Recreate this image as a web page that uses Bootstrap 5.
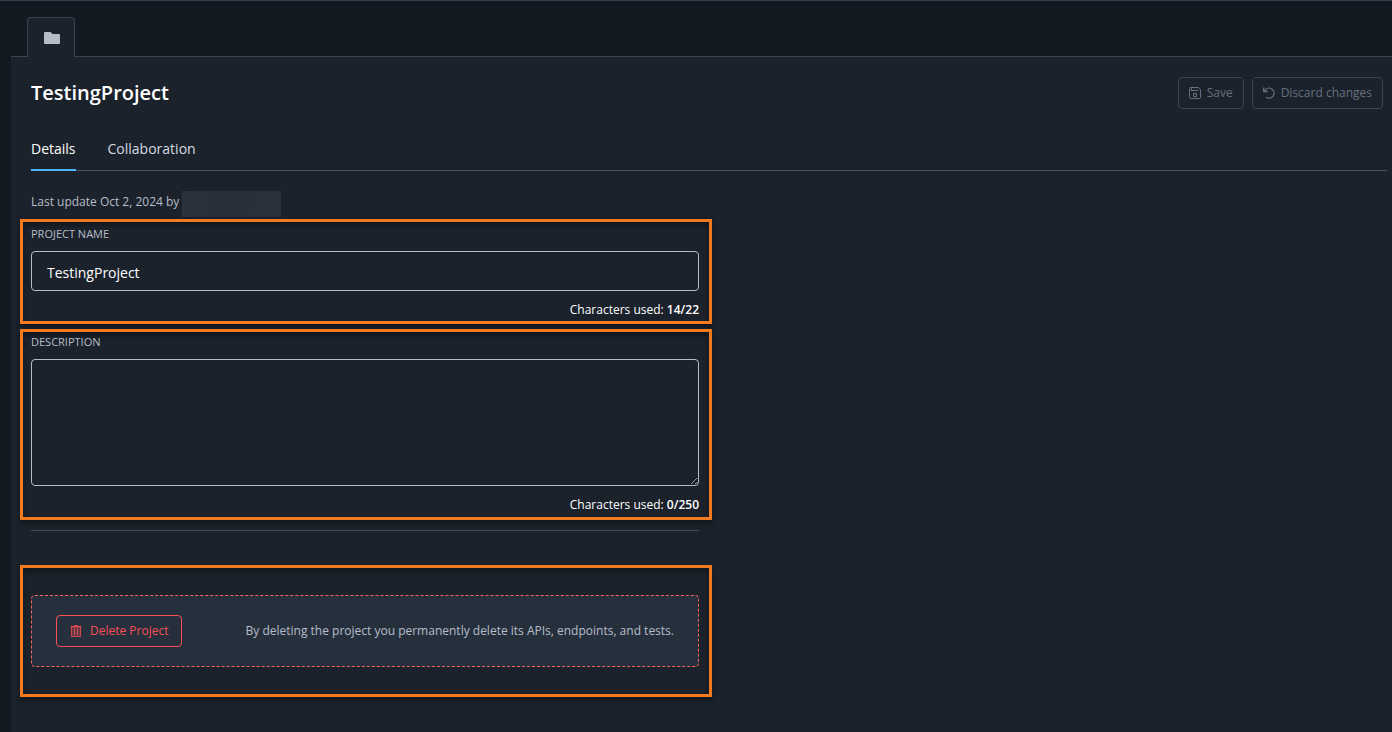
<!DOCTYPE html>
<html lang="en">
<head>
<meta charset="utf-8">
<meta name="viewport" content="width=device-width, initial-scale=1">
<title>TestingProject</title>
<link href="https://cdn.jsdelivr.net/npm/bootstrap@5.3.0/dist/css/bootstrap.min.css" rel="stylesheet">
<style>
  body { background: #121920; color: #b6bdc9; font-family: "Open Sans", sans-serif; font-size: 12px; line-height: 16px; }
  .shell { border-top: 1px solid #36404d; padding: 16px 0 0 11px; }
  .file-tabs { padding-left: 16px; }
  .file-tab { width: 48px; height: 40px; margin-bottom: -1px; background: #1b222b; border: 1px solid #3a4350; border-bottom: 0; border-radius: 4px 4px 0 0; color: #b6bdc9; position: relative; padding: 0 0 0 2px; }
  .panel { background: #1b222b; border-top: 1px solid #3a4350; padding: 20px 5px 0 20px; }
  .title-bar { padding-right: 4px; }
  .title-bar h1 { font-size: 20px; line-height: 32px; font-weight: 600; color: #fff; }
  .btn { --bs-btn-font-size: 12px; --bs-btn-border-radius: 4px; --bs-btn-padding-y: 0; line-height: 16px; height: 32px; }
  .btn-quiet { --bs-btn-padding-x: 10px; --bs-btn-color: #66707f; --bs-btn-disabled-color: #66707f; --bs-btn-border-color: #3a4351; --bs-btn-disabled-border-color: #3a4351; --bs-btn-disabled-opacity: 1; gap: 6px; }
  .btn-delete { --bs-btn-padding-x: 13px; --bs-btn-color: #fa4d56; --bs-btn-border-color: #fa4d56; --bs-btn-hover-color: #fff; --bs-btn-hover-bg: #fa4d56; gap: 8px; }
  .sections { gap: 32px; margin-top: 28px; border-bottom: 1px solid #4a525e; }
  .sections .nav-link { padding: 0 0 8px; margin-bottom: -1px; font-size: 14px; line-height: 24px; color: #d5dae1; border-bottom: 2px solid transparent; }
  .sections .nav-link.active { color: #fff; border-color: #4db5f9; }
  .updated { margin-top: 20px; height: 28px; gap: 3px; }
  .updated-text { line-height: 22px; }
  .redacted { width: 99px; height: 26px; background: linear-gradient(100deg, #2c323d, #292f3a 40%, #2b313c); }
  .marked { border: 3px solid #f47a20; margin: 0 -3px 0 -11px; padding: 4px 10px 3px 8px; box-shadow: 0 3px 5px rgba(0,0,0,.4), inset 0 3px 5px rgba(0,0,0,.4); }
  .marked-text { margin-top: 5px; padding: 2px 10px 4px 8px; }
  .marked-danger { margin-top: 34px; padding: 27px 10px 27px 8px; }
  .marked label { font-size: 11px; line-height: 16px; margin-bottom: 9px; }
  .marked .form-control { background: transparent; color: #fff; border: 1px solid #b6bdc9; border-radius: 4px; font-size: 14px; line-height: 24px; padding: 8px 15px 6px; }
  .marked input.form-control { height: 40px; }
  .marked textarea.form-control { height: 127px; }
  .counter { margin-top: 11px; color: #fff; }
  .counter strong { font-weight: 600; }
  .rule { height: 1px; margin: 10px 10px 0 0; background: #444d5a; }
  .danger-zone { background: #26303d; border: 1px dashed #fa605f; border-radius: 4px; padding: 19px 24px; }
</style>
</head>
<body>
<div class="shell d-flex flex-column min-vh-100">
  <div class="file-tabs d-flex">
    <button type="button" class="file-tab d-flex align-items-center justify-content-center" aria-label="Project">
      <svg width="16" height="12" viewBox="0 0 16 12" fill="currentColor" aria-hidden="true"><path d="M1 0h5.500L8.500 2H15a1 1 0 0 1 1 1v8a1 1 0 0 1-1 1H1a1 1 0 0 1-1-1V1a1 1 0 0 1 1-1z"/></svg>
    </button>
  </div>
  <main class="panel flex-grow-1">
    <header class="title-bar d-flex align-items-center justify-content-between">
      <h1 class="m-0">TestingProject</h1>
      <div class="d-flex gap-2">
        <button type="button" class="btn btn-quiet d-flex align-items-center" disabled>
          <svg width="12" height="12" viewBox="0 0 12 12" fill="none" stroke="currentColor" aria-hidden="true"><path d="M1.500.5h8l2 2v8a1 1 0 0 1-1 1h-9a1 1 0 0 1-1-1v-9a1 1 0 0 1 1-1zM2 3.500h7.500M2.500 1v2"/><path d="M4.500 6.500h3v3h-3z"/></svg>
          Save
        </button>
        <button type="button" class="btn btn-quiet d-flex align-items-center" disabled>
          <svg width="12" height="12" viewBox="0 0 12 12" fill="none" stroke="currentColor" stroke-width="1.300" aria-hidden="true"><path d="M.7.5v4h4M1 4.300l1.500-1.700A5 5 0 1 1 3 10.200"/></svg>
          Discard changes
        </button>
      </div>
    </header>
    <nav class="sections nav">
      <a class="nav-link active" href="#details" aria-current="page">Details</a>
      <a class="nav-link" href="#collaboration">Collaboration</a>
    </nav>
    <div class="row g-0">
      <form class="col-6" id="details">
        <div class="updated d-flex">
          <span class="updated-text">Last update Oct 2, 2024 by</span><span class="redacted"></span>
        </div>
        <div class="marked">
          <label class="d-block" for="name">PROJECT NAME</label>
          <input class="form-control" id="name" type="text" maxlength="22" value="TestingProject">
          <div class="counter text-end">Characters used: <strong>14/22</strong></div>
        </div>
        <div class="marked marked-text">
          <label class="d-block" for="description">DESCRIPTION</label>
          <textarea class="form-control d-block" id="description" maxlength="250"></textarea>
          <div class="counter text-end">Characters used: <strong>0/250</strong></div>
        </div>
        <div class="rule"></div>
        <div class="marked marked-danger">
          <div class="danger-zone d-flex align-items-center justify-content-between">
            <button type="button" class="btn btn-delete d-flex align-items-center">
              <svg width="12" height="12" viewBox="0 0 12 12" fill="none" stroke="currentColor" aria-hidden="true"><path d="M1.500 2h9v9.500h-9z" fill="currentColor" fill-opacity=".3" stroke-opacity=".8"/><path d="M.5 1.500h11M4 .5h4M4.500 3.500v6.500M7.500 3.500v6.500" stroke-opacity=".8"/></svg>
              Delete Project
            </button>
            <span>By deleting the project you permanently delete its APIs, endpoints, and tests.</span>
          </div>
        </div>
      </form>
    </div>
  </main>
</div>
<script src="https://cdn.jsdelivr.net/npm/bootstrap@5.3.0/dist/js/bootstrap.bundle.min.js"></script>
</body>
</html>
